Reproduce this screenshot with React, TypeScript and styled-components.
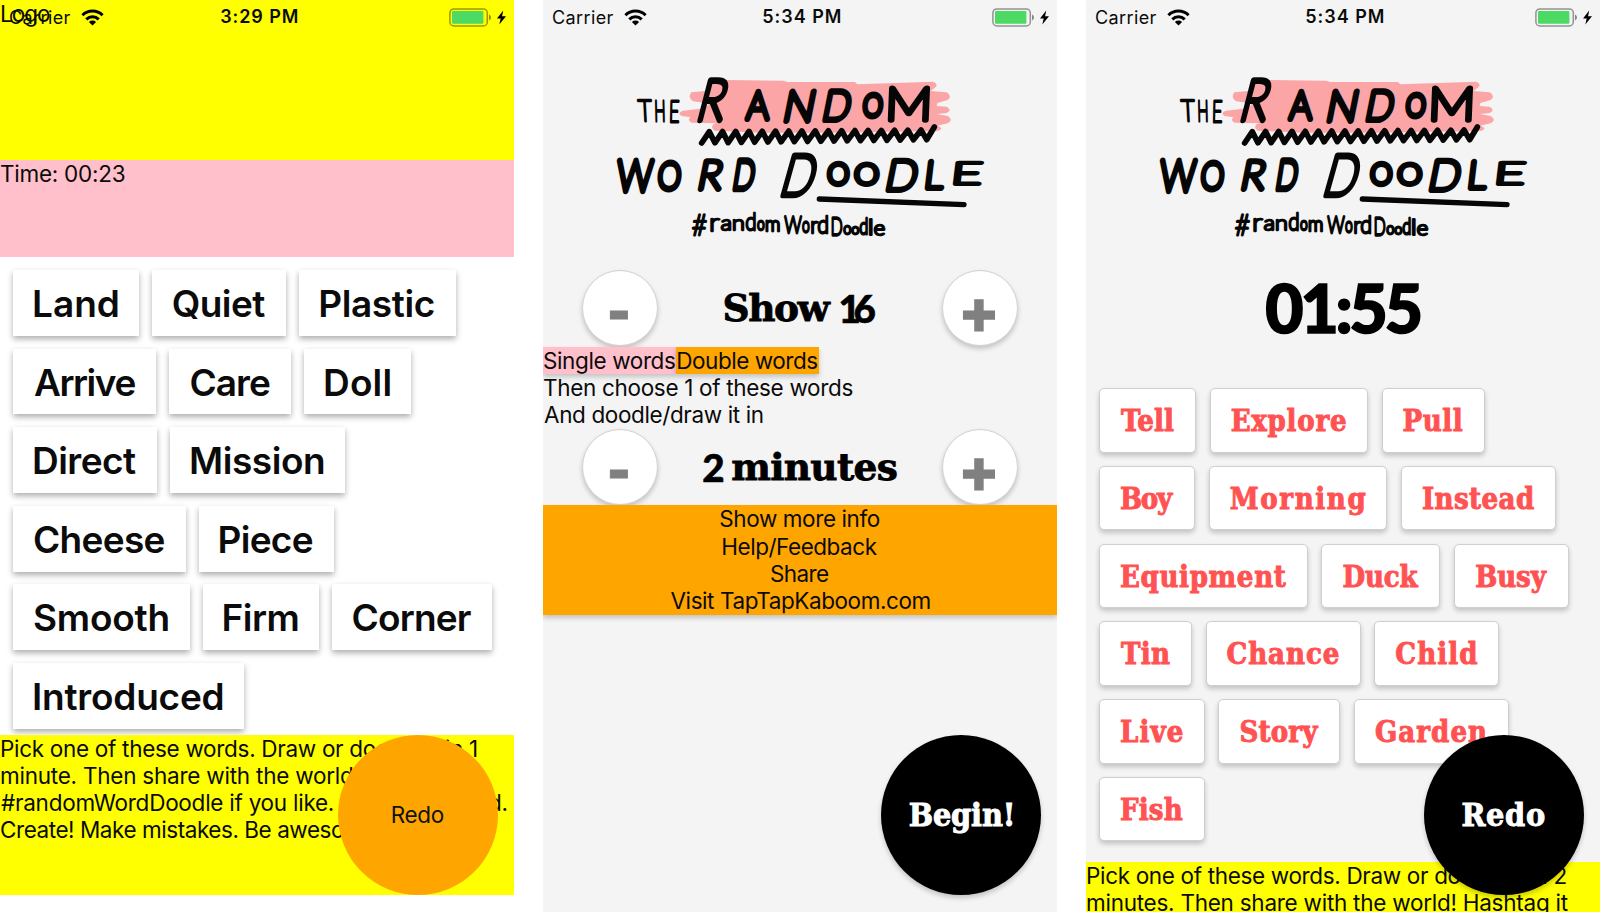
import React from "react";
import styled, { createGlobalStyle, css } from "styled-components";

const SANS = '"Inter", "Liberation Sans", sans-serif';
const SLAB = '"DejaVu Serif", serif';
const SLAB_NARROW = '"DejaVu Serif Condensed", "DejaVu Serif", serif';
const DIGITS = '"Lato", "DejaVu Sans", sans-serif';

const GlobalStyle = createGlobalStyle`
  * { box-sizing: border-box; }
  body { margin: 0; background: #fff; font-family: ${SANS}; color: #0b0b0b; }
`;

/* ---------- text measuring ---------- */

const canvas = document.createElement("canvas").getContext("2d")!;

function inkOf(text: string, font: string) {
  canvas.font = font;
  const m = canvas.measureText(text);
  return {
    left: -m.actualBoundingBoxLeft,
    width: m.actualBoundingBoxLeft + m.actualBoundingBoxRight,
    top: m.actualBoundingBoxAscent,
    bottom: m.actualBoundingBoxDescent,
  };
}

const Tracked = styled.span<{ $edge: number }>`
  display: inline-block;
  white-space: pre;
  text-align: left;
  -webkit-text-stroke: ${(p) => p.$edge}px currentColor;
`;

type FitProps = { text: string; width: number; size: number; weight?: number; family?: string; edge?: number };

/* Tracks a piece of text so that its ink takes the given width. */
function Fit({ text, width, size, weight = 400, family = SANS, edge = 0 }: FitProps) {
  const ink = inkOf(text, `${weight} ${size}px ${family}`);
  const letterSpacing = (width - ink.width) / Math.max(1, text.length - 1);
  return (
    <Tracked
      $edge={edge}
      style={{ letterSpacing, width, textIndent: -ink.left, font: `${weight} ${size}px ${family}`, lineHeight: "inherit" }}
    >
      {text}
    </Tracked>
  );
}

/* ---------- page and screens ---------- */

const Page = styled.main`
  display: flex;
  gap: 29px;
  width: 1600px;
  height: 912px;
  overflow: hidden;
`;

const Screen = styled.section<{ $bg: string }>`
  position: relative;
  display: flex;
  flex-direction: column;
  flex: none;
  width: 514px;
  height: 912px;
  overflow: hidden;
  background: ${(p) => p.$bg};
`;

const StatusBar = styled.header`
  position: absolute;
  inset: 0 0 auto 0;
  height: 33px;
  padding: 0 8px 0 10px;
  display: grid;
  grid-template-columns: 1fr auto 1fr;
  align-items: center;
  line-height: 33px;
  z-index: 2;
`;

const CarrierBox = styled.div`
  display: flex;
  align-items: center;
  gap: 10px;
`;

const PowerBox = styled.div`
  display: flex;
  justify-content: flex-end;
  align-items: center;
  gap: 5px;
`;

const Clock = styled.div`
  padding-left: 2px;
`;

function Status({ time }: { time: string }) {
  return (
    <StatusBar>
      <CarrierBox>
        <Fit text="Carrier" width={60.5} size={18} />
        <svg width="23" height="17" viewBox="0 0 23 17" fill="none" stroke="#000" strokeWidth="3">
          <path d="M1.4 6.3a14.3 14.3 0 0 1 20.2 0" />
          <path d="M5.3 10.4a8.8 8.8 0 0 1 12.4 0" />
          <path d="M11.5 16.6 7.9 13a5.1 5.1 0 0 1 7.2 0z" fill="#000" stroke="none" />
        </svg>
      </CarrierBox>
      <Clock>
        <Fit text={time} width={77.5} size={18} weight={600} />
      </Clock>
      <PowerBox>
        <svg width="43" height="19" viewBox="0 0 43 19">
          <rect x="0.9" y="0.9" width="37.4" height="17" rx="4" fill="none" stroke="#000" strokeOpacity="0.4" strokeWidth="1.5" />
          <rect x="3" y="3" width="31.4" height="12.8" rx="1" fill="#4cd964" />
          <path d="M40 6.6c2.6.8 2.6 5 0 5.8z" fill="#000" fillOpacity="0.45" />
        </svg>
        <svg width="9" height="15" viewBox="0 0 9 15">
          <path d="M6.200 0.500 0 8.400h3.700L2.300 14.500 9 6.300H5.100z" fill="#000" />
        </svg>
      </PowerBox>
    </StatusBar>
  );
}

const Block = styled.div<{ $h: number; $bg: string }>`
  flex: none;
  height: ${(p) => p.$h}px;
  padding-left: 1px;
  line-height: 28px;
  background: ${(p) => p.$bg};
`;

const Line = styled.div`
  display: flex;
  height: 27px;
  padding-left: 1px;
  line-height: 28px;
`;

const Paragraph = styled.div<{ $h: number; $top: number }>`
  flex: none;
  height: ${(p) => p.$h}px;
  margin-top: ${(p) => p.$top}px;
  background: #ff0;
`;

const Copy = ({ text, width }: { text: string; width: number }) => (
  <Line>
    <Fit text={text} width={width} size={22.5} />
  </Line>
);

/* ---------- word chips ---------- */

const Words = styled.div<{ $top: number; $gap: number }>`
  display: flex;
  flex-direction: column;
  gap: ${(p) => p.$gap}px;
  padding: ${(p) => p.$top}px 0 0 13px;
`;

const WordRow = styled.div<{ $gap: number }>`
  display: flex;
  gap: ${(p) => p.$gap}px;
`;

const Chip = styled.div<{ $w: number; $slab: boolean }>`
  display: flex;
  justify-content: center;
  flex: none;
  width: ${(p) => p.$w}px;
  background: #fff;
  ${(p) =>
    p.$slab
      ? css`
          height: 64.5px;
          line-height: 65px;
          color: #ff5252;
          border: 1.5px solid #cfcfcf;
          border-radius: 5px;
          box-shadow: 0 3px 5px rgba(0, 0, 0, 0.2);
        `
      : css`
          height: 65.8px;
          line-height: 67.5px;
          box-shadow: 0 3px 6px rgba(0, 0, 0, 0.32);
        `}
`;

type Word = [string, number];

function WordGrid({ rows, slab = false, top, gap }: { rows: Word[][]; slab?: boolean; top: number; gap: number }) {
  return (
    <Words $top={top} $gap={gap}>
      {rows.map((row) => (
        <WordRow key={row[0][0]} $gap={slab ? 13.8 : 13}>
          {row.map(([word, width]) => (
            <Chip key={word} $w={width} $slab={slab}>
              {slab ? (
                <Fit text={word} width={width - 43.8} size={29} weight={700} family={SLAB_NARROW} edge={0.9} />
              ) : (
                <Fit text={word} width={width - 42} size={37} weight={600} />
              )}
            </Chip>
          ))}
        </WordRow>
      ))}
    </Words>
  );
}

/* ---------- round action button ---------- */

const Fab = styled.button<{ $bg: string; $fg: string }>`
  position: absolute;
  right: 16.3px;
  bottom: 16.7px;
  width: 160px;
  height: 160px;
  padding: 0;
  border: 0;
  border-radius: 50%;
  line-height: 160px;
  text-align: center;
  color: ${(p) => p.$fg};
  background: ${(p) => p.$bg};
  box-shadow: ${(p) => (p.$bg === "#000" ? "0 3px 5px rgba(0,0,0,.2)" : "none")};
`;

/* ---------- stepper ---------- */

const Stepper = styled.div`
  display: flex;
  flex: none;
  align-items: center;
  justify-content: space-between;
  height: 76.8px;
  padding: 0 39px;
`;

const RoundButton = styled.button`
  display: flex;
  justify-content: center;
  width: 76px;
  height: 76px;
  padding: 0;
  border: 1.5px solid #d2d2d2;
  border-radius: 50%;
  background: #fff;
  color: #808080;
  box-shadow: 0 3px 5px rgba(0, 0, 0, 0.2);
`;

const Sign = styled.span<{ $size: number; $line: number; $stroke: number }>`
  font: 700 ${(p) => p.$size}px "Liberation Sans", Arial, sans-serif;
  line-height: ${(p) => p.$line}px;
  margin-left: -2px;
  -webkit-text-stroke: ${(p) => p.$stroke}px #808080;
`;

const StepLabel = styled.div`
  display: flex;
  gap: 9px;
  line-height: 76px;
  color: #000;
`;

const Minus = () => (
  <RoundButton>
    <Sign $size={67} $line={76} $stroke={1}>-</Sign>
  </RoundButton>
);

const Plus = () => (
  <RoundButton>
    <Sign $size={58} $line={87} $stroke={3}>+</Sign>
  </RoundButton>
);

const Tabs = styled.div`
  display: flex;
  flex: none;
  height: 27.3px;
`;

const Tab = styled.div<{ $bg: string; $w: number }>`
  width: ${(p) => p.$w}px;
  height: 27.3px;
  line-height: 28px;
  padding-left: 1px;
  white-space: nowrap;
  background: ${(p) => p.$bg};
  box-shadow: 0 3px 5px rgba(0, 0, 0, 0.2);
`;

const Hints = styled.div`
  display: flex;
  flex-direction: column;
  flex: none;
  height: 54.6px;
`;

const Menu = styled.nav`
  flex: none;
  background: #ffa500;
  box-shadow: 0 3px 5px rgba(0, 0, 0, 0.2);
`;

const MenuItem = styled.div`
  display: flex;
  justify-content: center;
  height: 27.4px;
  line-height: 28.5px;
`;

const Timer = styled.div`
  display: flex;
  flex: none;
  justify-content: center;
  height: 116px;
  line-height: 115px;
  color: #000;
`;

/* ---------- hand-lettered logo ---------- */

const LogoBox = styled.div<{ $h: number }>`
  flex: none;
  height: ${(p) => p.$h}px;
  padding: 60px 0 0 57px;
`;

const LETTERING = '"Lato"';

/* character, left, top, right, baseline, slant */
type Glyph = [string, number, number, number, number, number];

const THIN: Glyph[] = [
  ["T", 114, 122, 156, 184, -0.05],
  ["H", 167, 123, 192, 184, -0.02],
  ["E", 212, 122, 236, 185, 0.02],
];

const BOLD: Glyph[] = [
  ["R", 299, 62, 392, 181, 0.26],
  ["A", 441, 93, 506, 176, 0.04],
  ["N", 558, 93, 643, 183, 0.2],
  ["D", 674, 93, 754, 179, 0.2],
  ["O", 792, 103, 845, 168, 0.06],
  ["M", 872, 84, 982, 181, 0.04],
  ["W", 53, 300, 158, 392, 0.06],
  ["O", 177, 309, 240, 389, 0.06],
  ["R", 301, 303, 373, 387, 0.2],
  ["D", 404, 302, 466, 387, 0.16],
  ["D", 548, 288, 656, 406, 0.28],
  ["O", 687, 311, 743, 373, 0.02],
  ["O", 768, 313, 831, 373, 0.02],
  ["D", 864, 303, 954, 391, 0.2],
  ["L", 982, 304, 1034, 384, 0.12],
  ["E", 1068, 309, 1142, 373, 0.12],
];

const TAG: Glyph[] = [
  ["#", 278, 464, 318, 526, 0.05],
  ["r", 335, 478, 357, 514, 0],
  ["a", 366, 480, 390, 511, 0],
  ["n", 402, 480, 428, 511, 0],
  ["d", 440, 459, 464, 512, 0],
  ["o", 474, 484, 491, 510, 0],
  ["m", 500, 482, 536, 512, 0],
  ["W", 554, 470, 603, 520, 0.02],
  ["o", 609, 488, 626, 518, 0],
  ["r", 637, 486, 652, 518, 0],
  ["d", 656, 468, 681, 520, 0],
  ["D", 697, 473, 724, 525, 0],
  ["o", 733, 498, 751, 521, 0],
  ["o", 757, 500, 775, 521, 0],
  ["d", 781, 476, 800, 523, 0],
  ["l", 811, 478, 813, 525, 0],
  ["e", 825, 498, 852, 527, 0],
];

const Letter = styled.text<{ $stroke: number }>`
  font: 100 100px ${LETTERING}, sans-serif;
  fill: #060606;
  stroke: #060606;
  stroke-width: ${(p) => p.$stroke / 3}px;
  stroke-linejoin: round;
  stroke-linecap: round;
  vector-effect: non-scaling-stroke;
`;

function Lettering({ glyphs, stroke }: { glyphs: Glyph[]; stroke: number }) {
  return (
    <>
      {glyphs.map(([char, left, top, right, base, slant], i) => {
        const ink = inkOf(char, `100 100px ${LETTERING}`);
        const sy = (base - top) / (ink.top + ink.bottom);
        const sx = Math.max(0.2, (right - left - (base - top) * Math.abs(slant)) / Math.max(ink.width, 2));
        const x = left - sx * ink.left + (slant < 0 ? (top - base) * slant : 0);
        const y = base - sy * ink.bottom;
        return (
          <Letter key={i} $stroke={stroke} transform={`matrix(${sx} 0 ${-slant * sy} ${sy} ${x} ${y})`}>
            {char}
          </Letter>
        );
      })}
    </>
  );
}

const TEETH = 17;
const zigzag = Array.from({ length: TEETH + 1 }, (_, i) => {
  const x = 305 + (i * 675) / TEETH;
  const low = 249 - (i * 10) / TEETH;
  const high = (i === TEETH ? 206 : 215) - (i * 5) / TEETH;
  return `${x} ${low} ${x + 23} ${high}`;
}).join(" L");

function Logo({ height }: { height: number }) {
  return (
    <LogoBox $h={height}>
      <svg width="400" height="190" viewBox="0 0 1200 570">
        <path
          fill="#fba5a6"
          d="M325 74 380 60 550 62 562 66 765 66 772 73 1000 65Q1016 72 1006 82L992 93 1040 97Q1058 108 1043 120L1012 129 1010 138 1040 140Q1058 150 1040 159L1010 162 1043 168Q1062 180 1043 190L1012 197Q1036 206 1012 213L700 218H480L345 212Q331 205 340 193L350 190 275 188Q260 180 272 172L245 168Q230 158 250 152L300 146 326 135 320 130 280 124Q262 112 274 97L325 92Z"
        />
        <path d={`M${zigzag}`} fill="none" stroke="#060606" strokeWidth="17" strokeLinejoin="round" strokeLinecap="round" />
        <path d="M658 417 1092 434" stroke="#060606" strokeWidth="16" strokeLinecap="round" />
        <Lettering glyphs={THIN} stroke={8} />
        <Lettering glyphs={BOLD} stroke={17.5} />
        <Lettering glyphs={TAG} stroke={8.5} />
      </svg>
    </LogoBox>
  );
}

/* ---------- data ---------- */

const FIRST_WORDS: Word[][] = [
  [["Land", 125.8], ["Quiet", 134.4], ["Plastic", 156.5]],
  [["Arrive", 143.4], ["Care", 121.6], ["Doll", 107.5]],
  [["Direct", 144], ["Mission", 175]],
  [["Cheese", 172.5], ["Piece", 135.2]],
  [["Smooth", 176.5], ["Firm", 116], ["Corner", 160.3]],
  [["Introduced", 230.6]],
];

const SECOND_WORDS: Word[][] = [
  [["Tell", 97], ["Explore", 158], ["Pull", 103]],
  [["Boy", 96], ["Morning", 178.5], ["Instead", 154.7]],
  [["Equipment", 208.7], ["Duck", 119], ["Busy", 114.3]],
  [["Tin", 92.8], ["Chance", 155], ["Child", 124.7]],
  [["Live", 105.7], ["Story", 121.7], ["Garden", 155]],
  [["Fish", 105.7]],
];

export default function App() {
  return (
    <>
      <GlobalStyle />
      <Page>
        <Screen $bg="#fff">
          <Status time="3:29 PM" />
          <Block $h={160.4} $bg="#ff0">
            <Fit text="Logo" width={49} size={22.5} />
          </Block>
          <Block $h={96.2} $bg="#ffc0cb">
            <Fit text="Time: 00:23" width={123.7} size={22.5} />
          </Block>
          <WordGrid rows={FIRST_WORDS} top={13.5} gap={12.8} />
          <Paragraph $h={160} $top={6.2}>
            <Copy text="Pick one of these words. Draw or doodle it in 1" width={476} />
            <Copy text="minute. Then share with the world! Hashtag it" width={470} />
            <Copy text="#randomWordDoodle if you like. We are all good." width={505.5} />
            <Copy text="Create! Make mistakes. Be awesome." width={380} />
          </Paragraph>
          <Fab $bg="#ffa500" $fg="#111">
            <Fit text="Redo" width={52} size={22.5} />
          </Fab>
        </Screen>

        <Screen $bg="#f4f4f4">
          <Status time="5:34 PM" />
          <Logo height={269.8} />
          <Stepper>
            <Minus />
            <StepLabel>
              <Fit text="Show" width={107} size={37.5} weight={700} family={SLAB} edge={0.8} />
              <Fit text="16" width={35} size={38.5} weight={900} family={DIGITS} edge={0.6} />
            </StepLabel>
            <Plus />
          </Stepper>
          <Tabs>
            <Tab $bg="#ffc0cb" $w={133.3}>
              <Fit text="Single words" width={131} size={22.5} />
            </Tab>
            <Tab $bg="#ffa500" $w={143}>
              <Fit text="Double words" width={140} size={22.5} />
            </Tab>
          </Tabs>
          <Hints>
            <Copy text="Then choose 1 of these words" width={308.5} />
            <Copy text="And doodle/draw it in" width={218.7} />
          </Hints>
          <Stepper>
            <Minus />
            <StepLabel>
              <Fit text="2" width={20} size={38.5} weight={900} family={DIGITS} edge={0.6} />
              <Fit text="minutes" width={164.5} size={37.5} weight={700} family={SLAB} edge={0.8} />
            </StepLabel>
            <Plus />
          </Stepper>
          <Menu>
            <MenuItem><Fit text="Show more info" width={159.4} size={22.5} /></MenuItem>
            <MenuItem><Fit text="Help/Feedback" width={155.3} size={22.5} /></MenuItem>
            <MenuItem><Fit text="Share" width={58} size={22.5} /></MenuItem>
            <MenuItem><Fit text="Visit TapTapKaboom.com" width={259} size={22.5} /></MenuItem>
          </Menu>
          <Fab $bg="#000" $fg="#fff">
            <Fit text="Begin!" width={102} size={32} weight={700} family={SLAB_NARROW} edge={0.9} />
          </Fab>
        </Screen>

        <Screen $bg="#f4f4f4">
          <Status time="5:34 PM" />
          <Logo height={250} />
          <Timer>
            <Fit text="01:55" width={153.5} size={66} weight={900} family={DIGITS} edge={1.6} />
          </Timer>
          <WordGrid rows={SECOND_WORDS} slab top={22} gap={13.3} />
          <Paragraph $h={160} $top={20.3}>
            <Copy text="Pick one of these words. Draw or doodle it in 2" width={479.4} />
            <Copy text="minutes. Then share with the world! Hashtag it" width={480.7} />
          </Paragraph>
          <Fab $bg="#000" $fg="#fff">
            <Fit text="Redo" width={82.5} size={32} weight={700} family={SLAB_NARROW} edge={0.9} />
          </Fab>
        </Screen>
      </Page>
    </>
  );
}
